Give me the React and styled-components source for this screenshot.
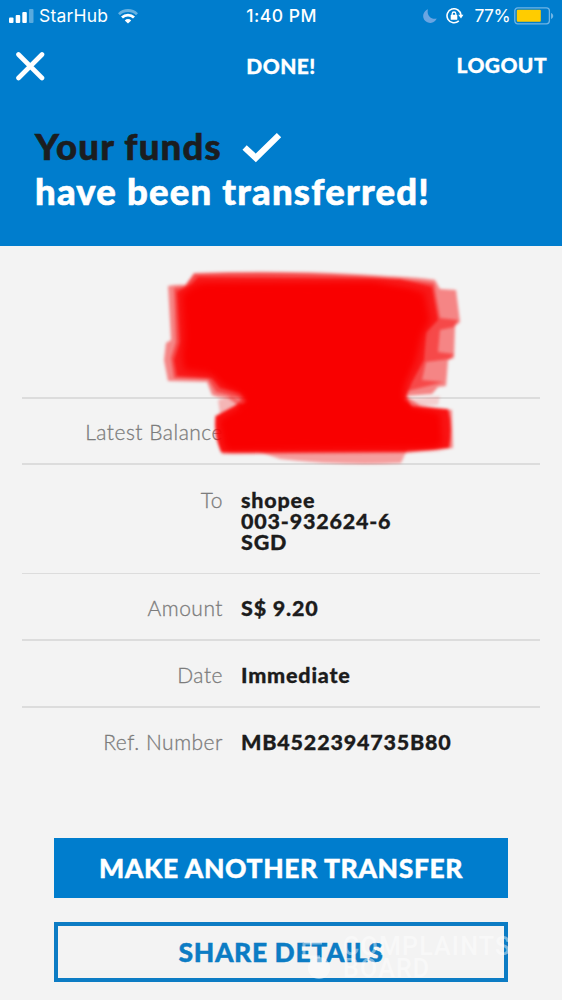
import styled, { createGlobalStyle } from "styled-components";

const GlobalStyle = createGlobalStyle`
  * {
    box-sizing: border-box;
  }
  body {
    margin: 0;
    background: #f3f3f3;
    font-family: Lato, "Liberation Sans", sans-serif;
  }
`
const ScreenStyled = styled.div`
  position: relative;
  display: flex;
  flex-direction: column;
  width: 562px;
  height: 1000px;
  overflow: hidden;
  background: #f3f3f3;
`
const HeaderStyled = styled.header`
  display: flex;
  flex-direction: column;
  height: 246px;
  background: #007dcd;
  color: #fff;
`
const StatusBarStyled = styled.div`
  display: grid;
  grid-template-columns: 1fr auto 1fr;
  align-items: center;
  height: 32px;
  padding: 0 8px 0 9px;
  font-family: Inter, "Liberation Sans", sans-serif;
  font-size: 17.5px;
  line-height: 32px;
`
const StatusSideStyled = styled.div`
  display: flex;
  align-items: center;
  justify-content: ${({$end}) => $end ? "flex-end" : "flex-start"};
`
const StatusIconsStyled = styled.div`
  display: flex;
  align-items: center;
  gap: 9px;
  margin-right: 10px;
`
const StatusTextStyled = styled.span`
  font-weight: ${({$weight}) => $weight || 400};
  letter-spacing: ${({$spacing}) => $spacing || "0"};
  margin: ${({$margin}) => $margin || "0"};
`
const NavStyled = styled.nav`
  display: grid;
  grid-template-columns: 1fr auto 1fr;
  align-items: center;
  height: 68px;
  padding: 0 15px;
`
const NavTitleStyled = styled.div`
  font-weight: 900;
  font-size: 21px;
  line-height: 24px;
  letter-spacing: 0.4px;
  -webkit-text-stroke: 0.3px currentColor;
`
const LogoutStyled = styled(NavTitleStyled)`
  justify-self: end;
  padding-bottom: 3px;
`
const HeadlineStyled = styled.h1`
  display: flex;
  flex-direction: column;
  margin: 0;
  padding: 24px 35px 0;
  font-weight: 900;
  font-size: 36.5px;
  line-height: 45px;
  letter-spacing: 1.2px;
  -webkit-text-stroke: 0.6px currentColor;
`
const HeadlineLineStyled = styled.span`
  display: flex;
  align-items: center;
  gap: 20px;
  color: ${({$dark}) => $dark ? "#1b1d20" : "#fff"};
`
const DetailsStyled = styled.dl`
  display: flex;
  flex-direction: column;
  margin: 0 22px;
`
const RowStyled = styled.div`
  display: grid;
  grid-template-columns: 201px 1fr;
  column-gap: 18px;
  height: ${({$height}) => $height}px;
  padding-top: ${({$top}) => $top || 23}px;
  border-bottom: ${({$line}) => $line || 0}px solid #dcdcdc;
  font-size: 21px;
  line-height: 21px;
`
const LabelStyled = styled.dt`
  color: #7c7c7c;
  font-weight: 300;
  text-align: right;
  letter-spacing: 0.5px;
  -webkit-text-stroke: 0.3px currentColor;
`
const ValueStyled = styled.dd`
  margin: 0;
  padding-top: 1px;
  color: #1c1c1c;
  font-weight: 900;
  font-size: 21.5px;
  letter-spacing: 0.8px;
  white-space: pre-line;
  -webkit-text-stroke: 0.3px currentColor;
`
const ActionsStyled = styled.div`
  display: flex;
  flex-direction: column;
  gap: 24px;
  padding: 0 54px;
`
const ButtonStyled = styled.button`
  height: 60px;
  padding: 0;
  border: 4px solid ${({$outline}) => $outline ? "#0c7cc4" : "#007dcd"};
  background: ${({$outline}) => $outline ? "transparent" : "#007dcd"};
  color: ${({$outline}) => $outline ? "#0c7cc4" : "#fff"};
  font-family: inherit;
  font-weight: 900;
  font-size: 26.5px;
  line-height: 30px;
  letter-spacing: 0.6px;
  -webkit-text-stroke: 0.4px currentColor;
`
const MarkerStyled = styled.svg`
  position: absolute;
  left: 150px;
  top: 260px;
`
const WatermarkStyled = styled.div`
  position: absolute;
  left: 302px;
  top: 935px;
  display: flex;
  align-items: center;
  gap: 7px;
  width: 212px;
  color: rgba(255, 255, 255, 0.45);
  font-family: Roboto, "Liberation Sans", sans-serif;
  font-weight: 500;
  font-size: 25px;
  line-height: 22px;
  letter-spacing: 1.2px;
`
const WatermarkTextStyled = styled.div`
  display: flex;
  flex-direction: column;
`

const Signal = () => (
    <svg width="25" height="14" viewBox="0 0 25 14" fill="#fff">
        <rect x="0" y="8.5" width="4.5" height="5.5" rx="1"/>
        <rect x="6.7" y="6" width="4.5" height="8" rx="1"/>
        <rect x="13.3" y="3" width="4.5" height="11" rx="1"/>
        <rect x="20" y="0" width="4.5" height="14" rx="1" opacity="0.35"/>
    </svg>
)

const Wifi = () => (
    <svg width="20" height="15" viewBox="0 0 20 15" fill="none" stroke="#fff" strokeWidth="2.8">
        <path d="M1 5.2a12.8 12.8 0 0 1 18 0" opacity="0.4"/>
        <path d="M4 8.6a8.5 8.5 0 0 1 12 0"/>
        <path d="M10 14.6 6.8 11.4a4.5 4.5 0 0 1 6.4 0z" fill="#fff" stroke="none"/>
    </svg>
)

const Moon = () => (
    <svg width="14" height="14" viewBox="0 0 14 14">
        <path d="M5 0.3A7 7 0 1 0 13.7 9.5C8.5 11.2 3.2 6.5 5 0.3z" fill="#6aa5e2"/>
    </svg>
)

const RotationLock = () => (
    <svg width="18" height="16" viewBox="0 0 18 16" fill="none" stroke="#fff" strokeWidth="1.6">
        <path d="M12.8 12.9A7 7 0 1 1 15 7.2"/>
        <path d="M12.2 6.8h5.2L15 10.5z" fill="#fff" stroke="none"/>
        <rect x="4.7" y="6.8" width="6.6" height="5" rx="0.6" fill="#fff" stroke="none"/>
        <path d="M6.2 7.3V5.8a1.8 1.8 0 0 1 3.6 0v1.5" strokeWidth="1.3"/>
    </svg>
)

const Battery = () => (
    <svg width="40" height="18" viewBox="0 0 40 18">
        <rect x="0.8" y="0.8" width="34.6" height="16" rx="3" fill="none" stroke="#6fb5e6" strokeWidth="1.3"/>
        <rect x="2.8" y="2.8" width="24" height="12" rx="1" fill="#ffcc00"/>
        <path d="M37 6v6c1.4-.5 2.2-1.6 2.2-3S38.4 6.5 37 6z" fill="#6fb5e6"/>
    </svg>
)

const Close = () => (
    <svg width="30" height="30" viewBox="0 0 30 30" stroke="#fff" strokeWidth="4.6" strokeLinecap="round">
        <path d="M3.5 3.5l23.5 23.5M27 3.5L3.5 27"/>
    </svg>
)

const Check = () => (
    <svg width="40" height="32" viewBox="0 0 40 32" fill="none" stroke="#fff" strokeWidth="6.2">
        <path d="M2.6 16.5l11.2 10.4L37 4.1"/>
    </svg>
)

// Layered translucent strokes of a soft marker pen
const Marker = () => (
    <MarkerStyled width="330" height="215" viewBox="0 0 330 215">
        <defs>
            <filter id="soft" x="-5%" y="-5%" width="110%" height="110%">
                <feGaussianBlur stdDeviation="1.7"/>
            </filter>
            <filter id="softer" x="-10%" y="-10%" width="120%" height="120%">
                <feGaussianBlur stdDeviation="3.5"/>
            </filter>
        </defs>
        <g fill="#f90006">
            <g filter="url(#soft)">
                <path d="M18 26q10-2 18-1L44 13Q130 10 205 14T285 20L290 29 306 30 310 62 305 66 304 98 298 100 296 126 288 127 282 134 256 136 250 142 92 148 78 138 68 137 62 135 57 122 18 121 14 100 16 83 21 80z" opacity="0.45"/>
                <path d="M24 28L34 27 44 14Q130 11 205 16T284 24L290 58 308 60 304 67 290 70 288 92 304 94 300 99 276 102 272 120 294 122 258 131 256 136 270 146 302 150 303 188 256 193 72 194 66 178 65 156 84 148 92 138 66 132 58 119 24 118 21 98 26 82z" opacity="0.45"/>
                <path d="M68 140L82 136 92 144 70 154z" opacity="0.25"/>
                <path d="M258 139L290 136 288 145 268 146z" opacity="0.15"/>
                <path d="M104 190L258 188 251 203Q190 206 130 199z" opacity="0.35"/>
                <path d="M66 156L88 144 252 139 262 147 298 149Q303 166 299 188L256 191 71 192Q63 172 66 156z" opacity="0.85"/>
                <path d="M27 32L42 24 48 17 250 19 282 27 288 60 276 72 274 100 262 122 256 136 262 148 86 152 98 140 90 132 70 128 62 118 27 116 24 100 30 82z" opacity="0.65"/>
            </g>
            <path d="M32 34L46 24 225 23 274 32 280 60 272 75 266 100 254 126 252 145 290 154 292 186 76 189 70 160 96 146 92 134 74 126 62 114 34 110 32 96 34 78z" filter="url(#softer)"/>
            <path d="M52 26L220 25 264 32 266 60 258 100 250 124 250 140 264 152 286 156 286 186 78 188 74 162 102 146 98 132 76 120 58 106 42 84z" filter="url(#softer)"/>
        </g>
    </MarkerStyled>
)

const Watermark = () => (
    <WatermarkStyled>
        <svg width="34" height="46" viewBox="0 0 34 46" fill="none" stroke="currentColor" strokeWidth="3">
            <path d="M2 8h18M2 8v14h16"/>
            <circle cx="17" cy="33" r="11" fill="currentColor" stroke="none"/>
        </svg>
        <WatermarkTextStyled>
            <span>COMPLAINTS</span>
            <span>BOARD</span>
        </WatermarkTextStyled>
    </WatermarkStyled>
)

const Row = ({label, height, top, line, children}) => (
    <RowStyled $height={height} $top={top} $line={line}>
        <LabelStyled>{label}</LabelStyled>
        <ValueStyled>{children}</ValueStyled>
    </RowStyled>
)

export default function App() {
    return (
        <>
            <GlobalStyle/>
            <ScreenStyled>
                <HeaderStyled>
                    <StatusBarStyled>
                        <StatusSideStyled>
                            <Signal/>
                            <StatusTextStyled $margin="0 10px 0 5px" $spacing="0.2px">StarHub</StatusTextStyled>
                            <Wifi/>
                        </StatusSideStyled>
                        <StatusTextStyled $weight={500} $spacing="0.5px">1:40 PM</StatusTextStyled>
                        <StatusSideStyled $end>
                            <StatusIconsStyled>
                                <Moon/>
                                <RotationLock/>
                            </StatusIconsStyled>
                            <StatusTextStyled $margin="0 4px 0 0" $spacing="-0.6px">77%</StatusTextStyled>
                            <Battery/>
                        </StatusSideStyled>
                    </StatusBarStyled>
                    <NavStyled>
                        <Close/>
                        <NavTitleStyled>DONE!</NavTitleStyled>
                        <LogoutStyled>LOGOUT</LogoutStyled>
                    </NavStyled>
                    <HeadlineStyled>
                        <HeadlineLineStyled $dark>Your funds <Check/></HeadlineLineStyled>
                        <HeadlineLineStyled>have been transferred!</HeadlineLineStyled>
                    </HeadlineStyled>
                </HeaderStyled>
                <DetailsStyled>
                    <Row height={153} line={2}/>
                    <Row label="Latest Balance" height={66} top={22} line={2}/>
                    <Row label="To" height={109} top={24} line={1}>{"shopee\n003-932624-6\nSGD"}</Row>
                    <Row label="Amount" height={67} line={2}>S$ 9.20</Row>
                    <Row label="Date" height={67} line={2}>Immediate</Row>
                    <Row label="Ref. Number" height={130}>MB4522394735B80</Row>
                </DetailsStyled>
                <ActionsStyled>
                    <ButtonStyled>MAKE ANOTHER TRANSFER</ButtonStyled>
                    <ButtonStyled $outline>SHARE DETAILS</ButtonStyled>
                </ActionsStyled>
                <Marker/>
                <Watermark/>
            </ScreenStyled>
        </>
    )
}
